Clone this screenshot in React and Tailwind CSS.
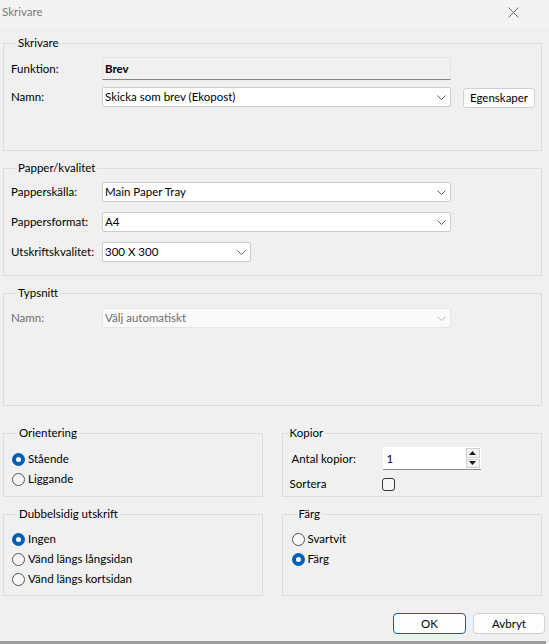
import React from 'react';

// Small down chevron used by the combo boxes
const Chevron = ({ className = 'text-[#5f5f5f]' }) => (
    <svg width="9" height="5" viewBox="0 0 9 5" className={className}>
        <path d="M0.5 0.5 L4.5 4.5 L8.5 0.5" fill="none" stroke="currentColor" strokeWidth="1" />
    </svg>
);

const Group = ({ title, className = '', children }) => (
    <fieldset className={`border border-[#dcdcdc] ${className}`}>
        <legend className="ml-[5px] px-[2px] leading-[16px] text-black">{title}</legend>
        {children}
    </fieldset>
);

const Select = ({ value, width = 'w-[349px]', disabled = false }) => (
    <div
        className={`flex items-center justify-between h-[20px] ${width} rounded-[2px] border pl-[2px] pr-[4px] ${
            disabled ? 'bg-[#fafafa] border-[#e6e6e6] text-[#6d6d6d]' : 'bg-white border-[#cccccc] text-black'
        }`}
    >
        <span className="leading-[18px]">{value}</span>
        <Chevron className={disabled ? 'text-[#b8b8b8]' : 'text-[#5f5f5f]'} />
    </div>
);

const Radio = ({ checked, label }) => (
    <div className="flex items-center h-[20px]">
        {checked ? (
            <span className="w-[13px] h-[13px] rounded-full bg-[#005fb8] flex items-center justify-center">
                <span className="w-[5px] h-[5px] rounded-full bg-white" />
            </span>
        ) : (
            <span className="w-[13px] h-[13px] rounded-full border border-[#555555] bg-[#f6f6f6]" />
        )}
        <span className="ml-[3px]">{label}</span>
    </div>
);

const FieldRow = ({ label, children, muted = false }) => (
    <div className="flex items-center">
        <span className={`w-[91px] ${muted ? 'text-[#6d6d6d]' : ''}`}>{label}</span>
        {children}
    </div>
);

const SpinBox = ({ value }) => (
    <div className="flex h-[23px] w-[98px] bg-white border-b border-[#8a8a8a]">
        <span className="flex-1 pl-[4px] leading-[23px]">{value}</span>
        <div className="w-[15px] flex flex-col gap-[1px] py-[1px] pr-[1px]">
            <div className="flex-1 flex items-center justify-center border border-[#cfcfcf] bg-[#f3f3f3]">
                <svg width="7" height="4" viewBox="0 0 7 4"><path d="M3.5 0 L7 4 L0 4 Z" fill="#1a1a1a" /></svg>
            </div>
            <div className="flex-1 flex items-center justify-center border border-[#cfcfcf] bg-[#f3f3f3]">
                <svg width="7" height="4" viewBox="0 0 7 4"><path d="M0 0 L7 0 L3.5 4 Z" fill="#1a1a1a" /></svg>
            </div>
        </div>
    </div>
);

export default function App() {
    return (
        <div
            className="w-[549px] h-[644px] bg-[#f0f0f0] flex flex-col text-[11.5px] text-black overflow-hidden"
            style={{ fontFamily: '"Segoe UI", Lato, "Noto Sans", sans-serif' }}
        >
            {/* Title bar */}
            <div className="h-[27px] shrink-0 bg-[#f3f3f3] flex items-center justify-between pl-[2px] pr-[30px]">
                <span className="text-[#7a7a7a] -mt-[3px]">Skrivare</span>
                <svg width="11" height="11" viewBox="0 0 11 11" className="-mt-[3px]">
                    <path d="M0.5 0.5 L10.5 10.5 M10.5 0.5 L0.5 10.5" stroke="#6a6a6a" strokeWidth="1" />
                </svg>
            </div>

            <div className="flex flex-col pl-[3px] pr-[7px]">
                <Group title="Skrivare" className="mt-[8px] pl-[7px] pt-[6px] pb-[42px]">
                    <div className="flex flex-col gap-[7px]">
                        <FieldRow label="Funktion:">
                            <div className="h-[23px] w-[349px] bg-[#f0f0f0] border border-[#e4e4e4] border-b-[#858585] pl-[2px] flex items-center font-bold">
                                Brev
                            </div>
                        </FieldRow>
                        <div className="flex items-start h-[21px]">
                            <span className="w-[91px] leading-[20px]">Namn:</span>
                            <Select value="Skicka som brev (Ekopost)" />
                            <button className="ml-[12px] mt-[1px] h-[20px] w-[72px] rounded-[3px] border border-[#d0d0d0] bg-[#fdfdfd] leading-[18px]">
                                Egenskaper
                            </button>
                        </div>
                    </div>
                </Group>

                <Group title="Papper/kvalitet" className="mt-[9px] pl-[7px] pt-[6px] pb-[13px]">
                    <div className="flex flex-col gap-[10px]">
                        <FieldRow label="Papperskälla:">
                            <Select value="Main Paper Tray" />
                        </FieldRow>
                        <FieldRow label="Pappersformat:">
                            <Select value="A4" />
                        </FieldRow>
                        <FieldRow label="Utskriftskvalitet:">
                            <Select value="300 X 300" width="w-[149px]" />
                        </FieldRow>
                    </div>
                </Group>

                <Group title="Typsnitt" className="mt-[9px] pl-[7px] pt-[7px] pb-[77px]">
                    <FieldRow label="Namn:" muted>
                        <Select value="Välj automatiskt" disabled />
                    </FieldRow>
                </Group>

                <div className="flex items-start gap-[19px] mt-[19px]">
                    <Group title="Orientering" className="w-[260px] pl-[8px] pt-[8px] pb-[7px]">
                        <Radio checked label="Stående" />
                        <Radio label="Liggande" />
                    </Group>
                    <Group title="Kopior" className="w-[261px] pt-[6px] pb-[2px]">
                        <div className="flex items-center pl-[9px]">
                            <span className="w-[91px]">Antal kopior:</span>
                            <SpinBox value="1" />
                        </div>
                        <div className="flex items-center h-[20px] mt-[4px] pl-[7px]">
                            <span className="w-[92px]">Sortera</span>
                            <span className="w-[13px] h-[13px] rounded-[3px] border border-[#333333] bg-[#f7f7f7]" />
                        </div>
                    </Group>
                </div>

                <div className="flex items-start gap-[19px] mt-[9px]">
                    <Group title="Dubbelsidig utskrift" className="w-[260px] pl-[8px] pt-[7px] pb-[6px]">
                        <Radio checked label="Ingen" />
                        <Radio label="Vänd längs långsidan" />
                        <Radio label="Vänd längs kortsidan" />
                    </Group>
                    <Group title="Färg" className="w-[261px] pl-[9px] pt-[7px] pb-[26px]">
                        <Radio label="Svartvit" />
                        <Radio checked label="Färg" />
                    </Group>
                </div>

                <div className="flex justify-end gap-[7px] mt-[17px]">
                    <button className="h-[21px] w-[73px] rounded-[4px] border border-[#005fb8] bg-[#fdfdfd]">OK</button>
                    <button className="h-[21px] w-[72px] rounded-[4px] border border-[#d0d0d0] bg-[#fdfdfd] -mr-[3px]">
                        Avbryt
                    </button>
                </div>
            </div>

            <div className="mt-auto h-[3px] mr-[3px] bg-[#9c9c9c]" />
        </div>
    );
}
